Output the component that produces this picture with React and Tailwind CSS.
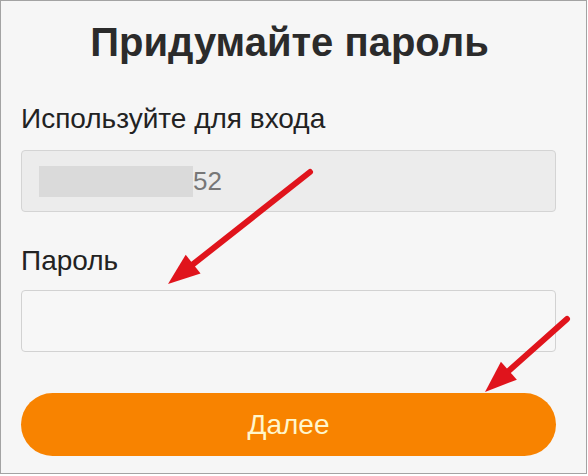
import React from 'react';

function Arrow({ x1, y1, x2, y2 }) {
  // line from tail (x1,y1) to tip (x2,y2), with a filled head
  const dx = x2 - x1;
  const dy = y2 - y1;
  const len = Math.hypot(dx, dy);
  const ux = dx / len;
  const uy = dy / len;
  const headLen = 32;
  const headW = 12;
  const bx = x2 - ux * headLen;
  const by = y2 - uy * headLen;
  const px = -uy * headW;
  const py = ux * headW;
  return (
    <g>
      <line x1={x1} y1={y1} x2={bx + ux * 4} y2={by + uy * 4} stroke="#e0141c" strokeWidth="6" strokeLinecap="round" />
      <polygon points={`${x2},${y2} ${bx + px},${by + py} ${bx - px},${by - py}`} fill="#e0141c" />
    </g>
  );
}

export default function App() {
  return (
    <div className="relative w-[588px] h-[476px] bg-white font-['Liberation_Sans',Arial,sans-serif]">
      <div className="w-[587px] h-[474px] border border-[#a3a3a3] bg-[#f6f6f6]">
        <h1 className="mt-[18px] pr-[8px] text-center text-[40px] leading-[46px] font-bold text-[#2b2b2b]">
          Придумайте пароль
        </h1>

        <div className="ml-[20px] mr-[30px] mt-[38px]">
          <p className="text-[28px] leading-[32px] text-[#222]">Используйте для входа</p>
          <div className="mt-[15px] flex h-[62px] items-center rounded-[4px] border border-[#d4d4d4] bg-[#ececec] pl-[17px]">
            <div className="h-[31px] w-[154px] bg-[#dadada]" />
            <span className="text-[26px] text-[#777]">52</span>
          </div>

          <p className="mt-[33px] text-[28px] leading-[32px] text-[#222]">Пароль</p>
          <div className="mt-[13px] h-[62px] rounded-[4px] border border-[#d2d2d2] bg-[#f7f7f7]" />

          <button className="mt-[41px] flex h-[63px] w-full items-center justify-center rounded-full bg-[#f88300] text-[28px] text-[#fff6cc]">
            Далее
          </button>
        </div>
      </div>

      <svg className="pointer-events-none absolute inset-0" width="588" height="476">
        <Arrow x1={310} y1={172} x2={168} y2={284} />
        <Arrow x1={567} y1={319} x2={485} y2={392} />
      </svg>
    </div>
  );
}
